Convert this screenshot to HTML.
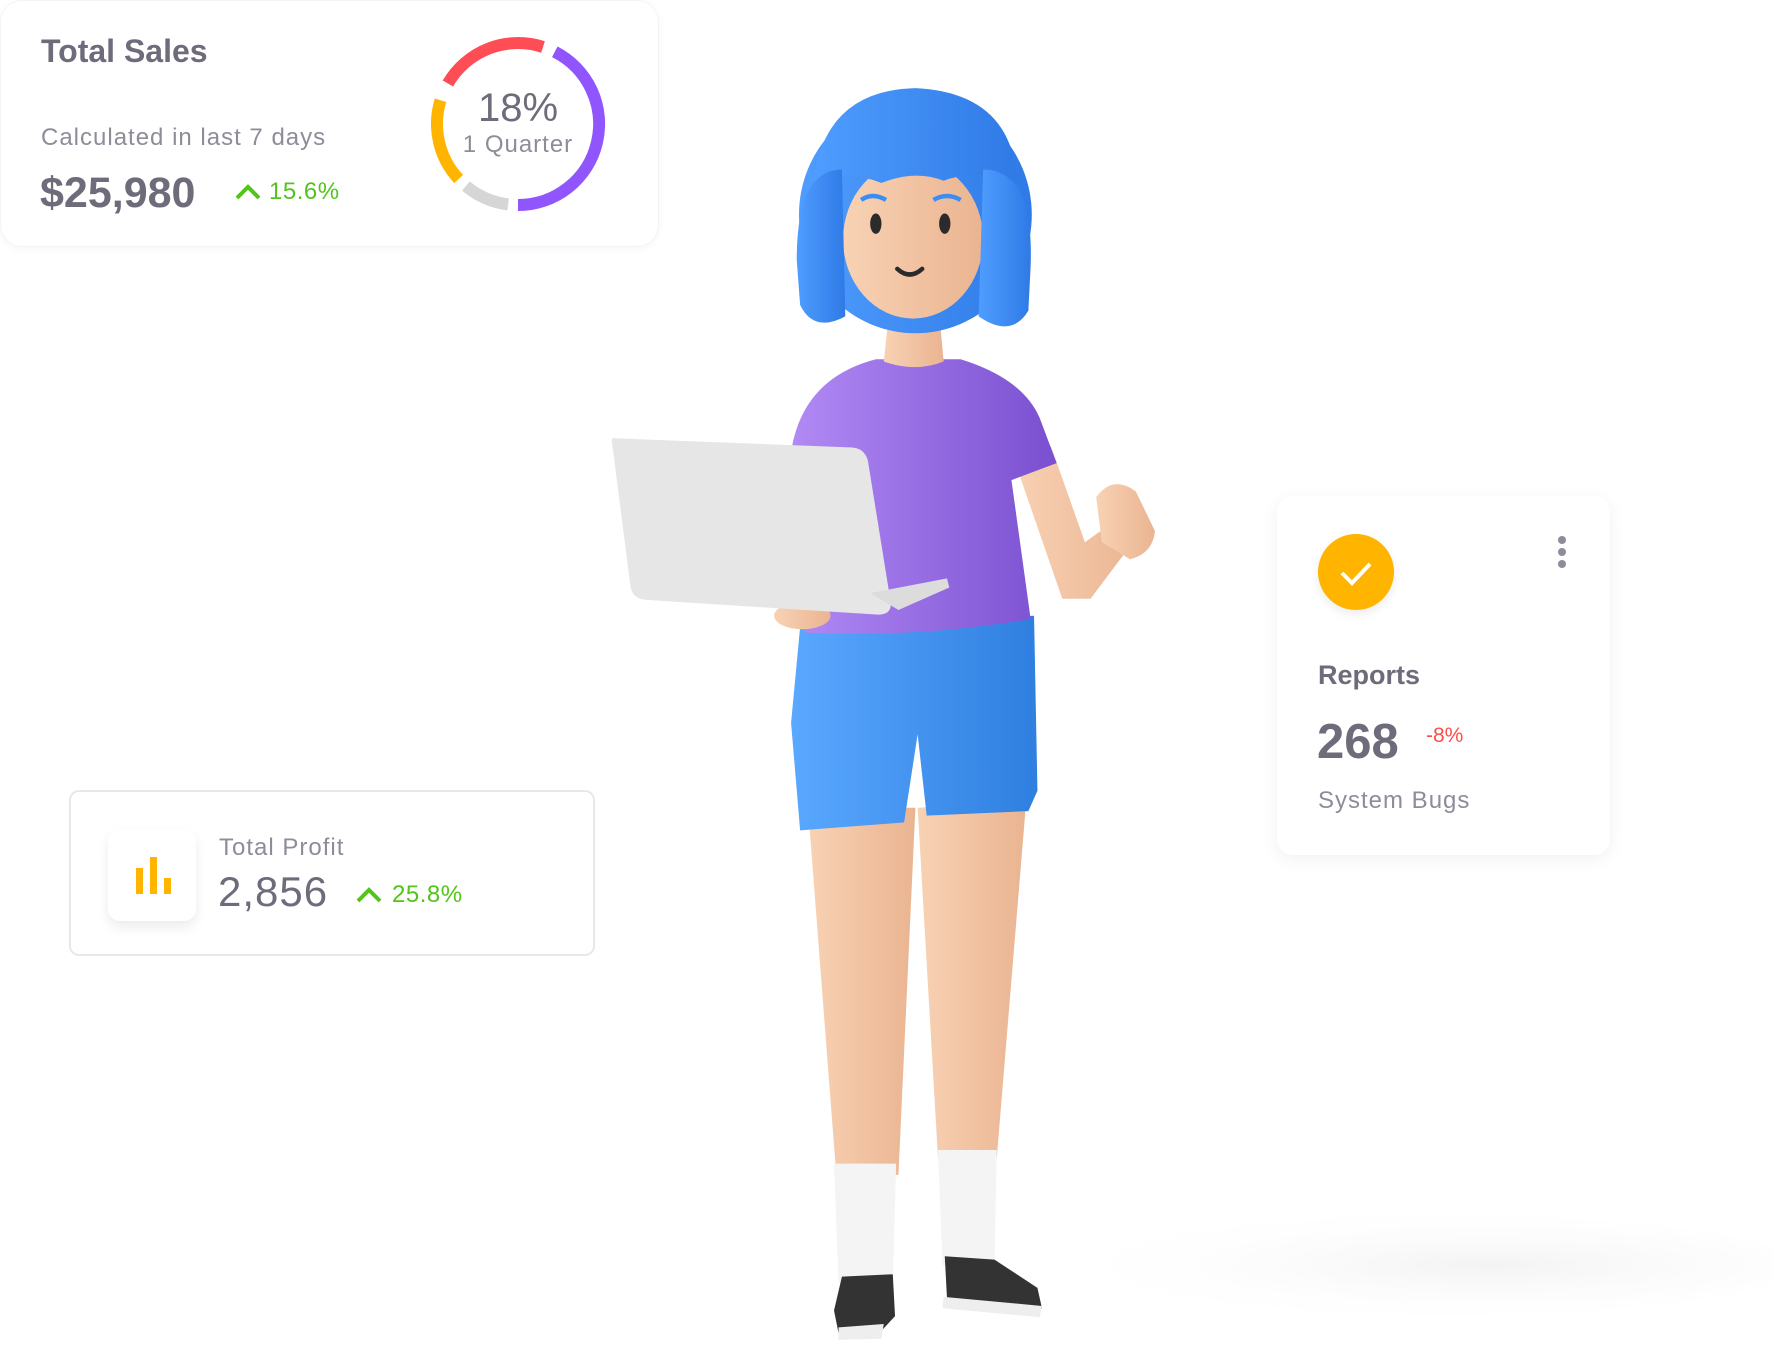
<!DOCTYPE html>
<html><head><meta charset="utf-8">
<style>
*{margin:0;padding:0;box-sizing:border-box}
html,body{width:1772px;height:1350px;background:#fff;overflow:hidden;font-family:"Liberation Sans",sans-serif;color:#6e6b7b}
.abs{position:absolute}
#fig{position:absolute;left:0;top:0;width:1772px;height:1350px}
.card{position:absolute;background:#fff}
.t{position:absolute;white-space:nowrap;line-height:1}
</style></head><body>

<svg id="fig" viewBox="0 0 1568 1195" preserveAspectRatio="none">
<defs>
<linearGradient id="skin" x1="0" x2="1"><stop offset="0" stop-color="#f8d2b4"/><stop offset="1" stop-color="#eab491"/></linearGradient>
<linearGradient id="shirt" x1="0" x2="1"><stop offset="0" stop-color="#b28af5"/><stop offset="1" stop-color="#7a4fd0"/></linearGradient>
<linearGradient id="shorts" x1="0" x2="1"><stop offset="0" stop-color="#5aa8ff"/><stop offset="1" stop-color="#2f7fe0"/></linearGradient>
<linearGradient id="hair" x1="0" x2="1"><stop offset="0" stop-color="#4f9dff"/><stop offset="1" stop-color="#2f7ae6"/></linearGradient>
<radialGradient id="shad" cx="0.6" cy="0.5" r="0.6"><stop offset="0" stop-color="#f3f3f3"/><stop offset="1" stop-color="#fff" stop-opacity="0"/></radialGradient>
</defs>
<ellipse cx="1250" cy="1120" rx="340" ry="45" fill="url(#shad)"/>
<path d="M715 715 L810 715 L795 1040 L740 1040 Z" fill="url(#skin)"/>
<path d="M812 715 L908 710 L882 1025 L830 1025 Z" fill="url(#skin)"/>
<path d="M738 1030 L793 1030 L790 1135 L742 1135 Z" fill="#f4f4f4"/>
<path d="M830 1018 L882 1018 L880 1120 L834 1120 Z" fill="#f4f4f4"/>
<path d="M745 1130 L790 1128 L792 1165 L780 1178 L742 1180 L738 1160 Z" fill="#333"/>
<path d="M742 1175 L782 1172 L780 1185 L742 1186 Z" fill="#eee"/>
<path d="M836 1112 L880 1115 L918 1140 L922 1158 L838 1150 Z" fill="#333"/>
<path d="M835 1148 L922 1156 L920 1166 L834 1158 Z" fill="#eee"/>
<path d="M708 555 L915 545 L918 700 L910 718 L820 722 L812 650 L800 728 L708 735 L700 640 Z" fill="url(#shorts)"/>
<path d="M895 400 L930 395 L960 480 L995 455 L1010 470 L965 530 L940 530 Z" fill="url(#skin)"/>
<path d="M970 440 Q985 420 1005 435 L1022 470 Q1020 490 1000 495 L975 480 Z" fill="url(#skin)"/>
<path d="M775 318 L850 318 Q905 335 920 370 L935 410 L895 425 L912 548 Q810 565 712 560 L718 440 L700 400 Q710 335 775 318 Z" fill="url(#shirt)"/>
<path d="M788 265 L830 265 L835 320 Q810 330 782 320 Z" fill="url(#skin)"/>
<ellipse cx="810" cy="190" rx="103" ry="105" fill="url(#hair)"/>
<ellipse cx="808" cy="212" rx="62" ry="70" fill="url(#skin)"/>
<path d="M720 160 Q730 80 810 78 Q895 82 900 160 Q860 150 835 160 Q810 150 780 162 Q750 150 720 160 Z" fill="url(#hair)"/>
<path d="M705 230 Q705 150 745 150 L748 280 Q720 295 708 270 Z" fill="url(#hair)"/>
<path d="M912 235 Q915 150 870 150 L866 280 Q895 300 910 275 Z" fill="url(#hair)"/>
<path d="M762 177 Q772 170 784 177" stroke="#3b8ef0" stroke-width="4" fill="none"/>
<path d="M826 177 Q838 170 850 177" stroke="#3b8ef0" stroke-width="4" fill="none"/>
<ellipse cx="775" cy="198" rx="5" ry="9" fill="#2b2b2b"/>
<ellipse cx="836" cy="198" rx="5" ry="9" fill="#2b2b2b"/>
<path d="M794 238 Q805 248 816 238" stroke="#2b2b2b" stroke-width="4" fill="none" stroke-linecap="round"/>
<ellipse cx="710" cy="545" rx="25" ry="12" fill="url(#skin)"/>
<path d="M545 388 Q540 386 542 395 L558 520 Q560 530 572 531 L775 544 Q790 545 788 532 L768 408 Q765 396 752 396 Z" fill="#e6e6e6"/>
<path d="M770 525 L838 512 L840 520 L795 540 Z" fill="#dcdcdc"/>
</svg>

<div class="card" style="left:0;top:0;width:659px;height:247px;border-radius:22px;box-shadow:0 2px 8px rgba(0,0,0,0.04);border:1px solid #f4f4f4"></div>
<div class="t" style="left:41px;top:35px;font-size:32px;font-weight:bold;color:#6e6b7b">Total Sales</div>
<div class="t" style="left:41px;top:126px;font-size:24px;color:#8f8c9a;letter-spacing:1px">Calculated in last 7 days</div>
<div class="t" style="left:40px;top:172px;font-size:43px;font-weight:bold;color:#6e6b7b">$25,980</div>
<svg class="abs" style="left:235px;top:183px" width="26" height="18" viewBox="0 0 26 18"><path d="M2 15 L13 4 L24 15" stroke="#52c41a" stroke-width="4" fill="none"/></svg>
<div class="t" style="left:269px;top:180px;font-size:24px;color:#52c41a;letter-spacing:0.5px">15.6%</div>
<svg class="abs" style="left:428px;top:34px" width="180" height="180" viewBox="-90 -90 180 180">
<g fill="none" stroke-width="12">
<path d="M-70.1 -40.5 A81 81 0 0 1 25 -77" stroke="#ff4d55"/>
<path d="M36.8 -72.2 A81 81 0 0 1 0 81" stroke="#9155fd"/>
<path d="M-9.9 80.4 A81 81 0 0 1 -52.1 62" stroke="#d6d6d6"/>
<path d="M-59.4 55 A81 81 0 0 1 -77.5 -23.7" stroke="#ffb400"/>
</g></svg>
<div class="t" style="left:418px;top:88px;width:200px;text-align:center;font-size:40px;color:#6e6b7b">18%</div>
<div class="t" style="left:418px;top:133px;width:200px;text-align:center;font-size:24px;color:#8f8c9a;letter-spacing:1px">1 Quarter</div>

<div class="card" style="left:1277px;top:496px;width:333px;height:359px;border-radius:16px;box-shadow:0 4px 18px rgba(0,0,0,0.06)"></div>
<div class="abs" style="left:1318px;top:534px;width:76px;height:76px;border-radius:50%;background:#ffb400;box-shadow:0 4px 10px rgba(0,0,0,0.08)"></div>
<svg class="abs" style="left:1338px;top:554px" width="36" height="36" viewBox="0 0 36 36"><path d="M4 19 L14 29 L32 10" stroke="#fff" stroke-width="4" fill="none"/></svg>
<div class="abs" style="left:1558px;top:536px;width:8px;height:8px;border-radius:50%;background:#8f8c9a"></div>
<div class="abs" style="left:1558px;top:548px;width:8px;height:8px;border-radius:50%;background:#8f8c9a"></div>
<div class="abs" style="left:1558px;top:560px;width:8px;height:8px;border-radius:50%;background:#8f8c9a"></div>
<div class="t" style="left:1318px;top:662px;font-size:27px;font-weight:bold;color:#6e6b7b">Reports</div>
<div class="t" style="left:1317px;top:718px;font-size:49px;font-weight:bold;color:#6e6b7b">268</div>
<div class="t" style="left:1426px;top:725px;font-size:21px;color:#ff4d49">-8%</div>
<div class="t" style="left:1318px;top:789px;font-size:24px;color:#8f8c9a;letter-spacing:1px">System Bugs</div>

<div class="card" style="left:69px;top:790px;width:526px;height:166px;border-radius:10px;border:2px solid #e8e8e8"></div>
<div class="abs" style="left:108px;top:829px;width:88px;height:92px;border-radius:12px;background:#fff;box-shadow:0 6px 12px rgba(0,0,0,0.08)"></div>
<div class="abs" style="left:136px;top:868px;width:7px;height:26px;background:#ffb400"></div>
<div class="abs" style="left:150px;top:857px;width:7px;height:37px;background:#ffb400"></div>
<div class="abs" style="left:164px;top:878px;width:7px;height:16px;background:#ffb400"></div>
<div class="t" style="left:219px;top:836px;font-size:24px;color:#8f8c9a;letter-spacing:1px">Total Profit</div>
<div class="t" style="left:218px;top:871px;font-size:42px;color:#6e6b7b;letter-spacing:1px">2,856</div>
<svg class="abs" style="left:356px;top:886px" width="26" height="18" viewBox="0 0 26 18"><path d="M2 15 L13 4 L24 15" stroke="#52c41a" stroke-width="4" fill="none"/></svg>
<div class="t" style="left:392px;top:883px;font-size:24px;color:#52c41a;letter-spacing:0.5px">25.8%</div>

</body></html>
